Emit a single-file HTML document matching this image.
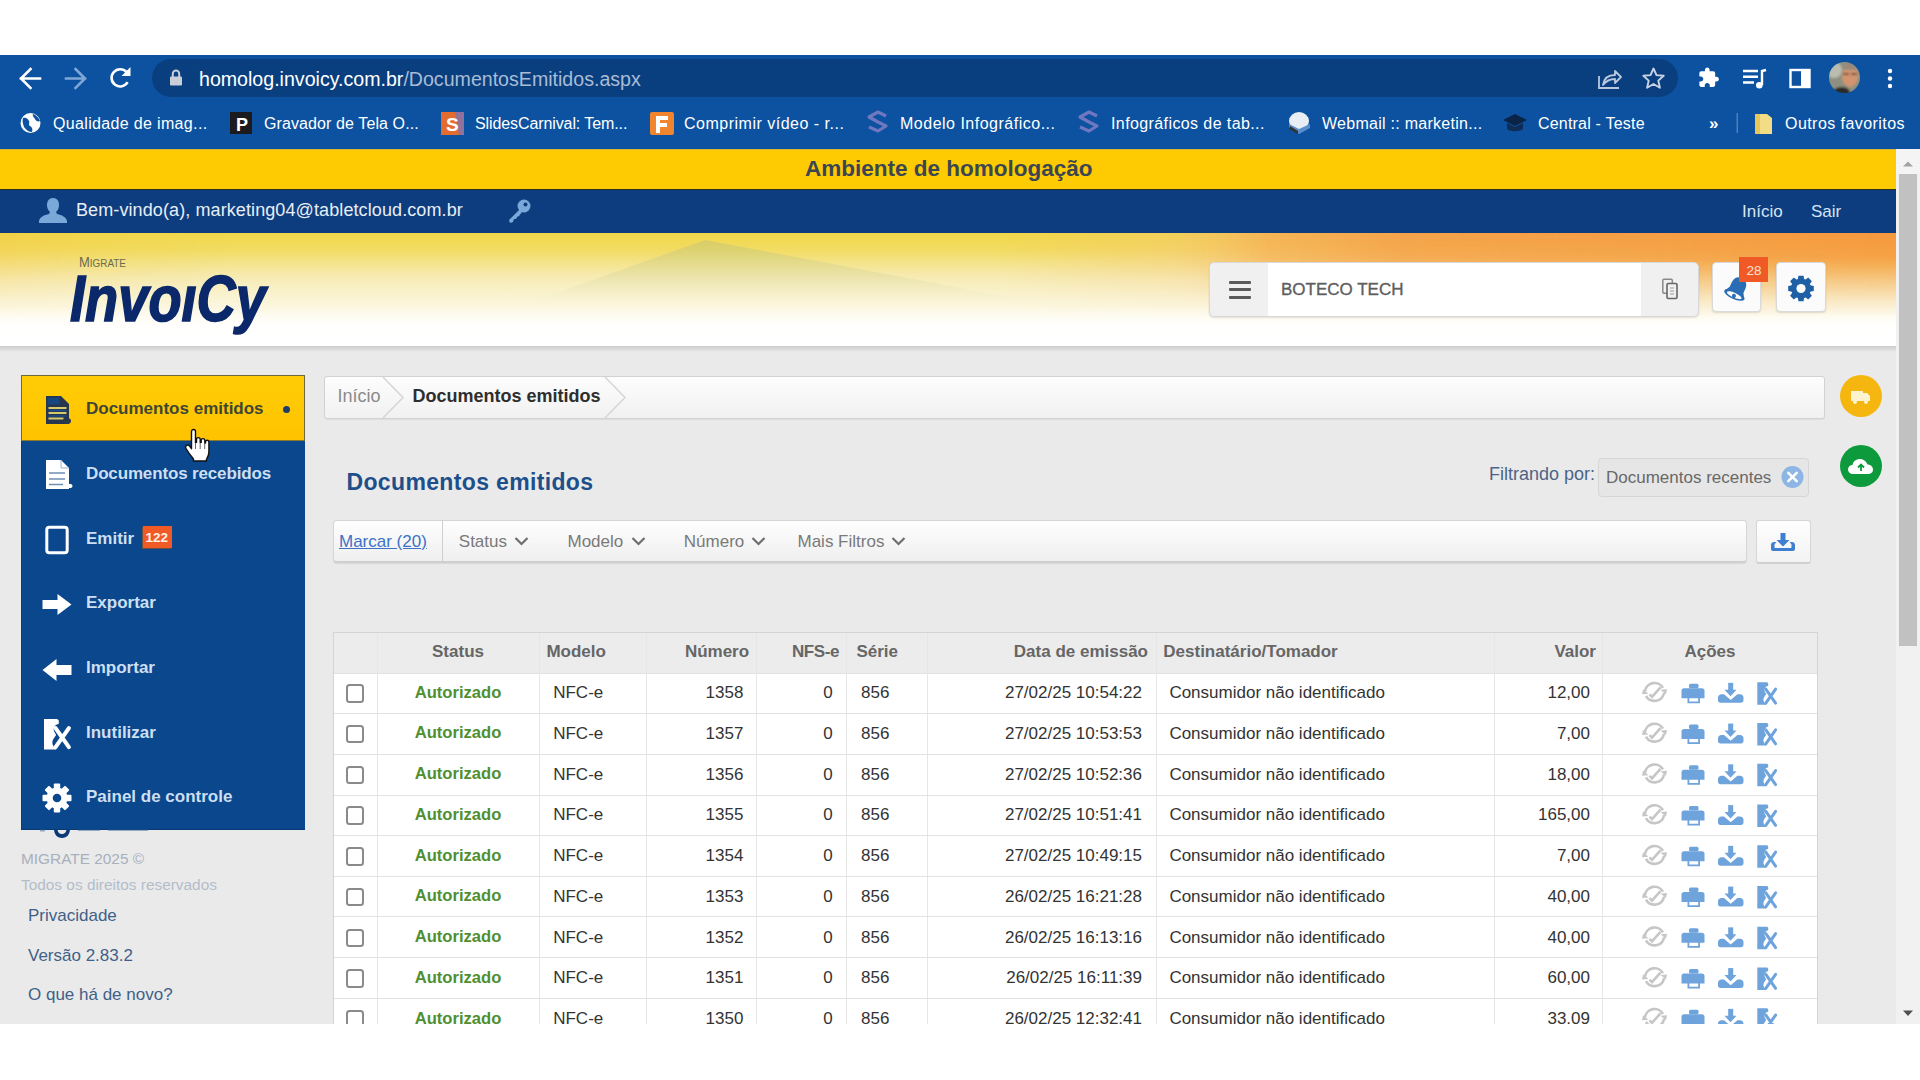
<!DOCTYPE html>
<html><head><meta charset="utf-8">
<style>
*{box-sizing:border-box;margin:0;padding:0}
html,body{width:1920px;height:1080px;overflow:hidden;background:#fff;font-family:"Liberation Sans",sans-serif}
.a{position:absolute}
.t{position:absolute;white-space:nowrap;line-height:1}
#chrome{left:0;top:55px;width:1920px;height:94px;background:#0c52a0}
#omni{left:152px;top:59px;width:1526px;height:38px;border-radius:19px;background:#0a3f7f}
#banner{left:0;top:149px;width:1896px;height:41px;background:#fecb02;border-top:1px solid #d8b830;border-bottom:1.5px solid #2e2e22}
#ubar{left:0;top:190px;width:1896px;height:43px;background:#0d3d7e}
#hdr{left:0;top:233px;width:1896px;height:113px;overflow:hidden;background:#fff}
#content{left:0;top:346px;width:1896px;height:678px;background:#eaeaea;overflow:hidden}
#sb{left:1896px;top:149px;width:24px;height:875px;background:#f1f1f1}
</style></head><body>
<div id="chrome" class="a"></div>
<div id="omni" class="a"></div>

<!-- chrome toolbar -->
<svg class="a" style="left:0;top:55px" width="1920" height="94" viewBox="0 55 1920 94">
 <g fill="none" stroke="#fff" stroke-width="2.6" stroke-linecap="square">
  <path d="M21 78.5h19M30.5 69l-9.5 9.5 9.5 9.5"/>
  <path d="M66 78.5h19M75.5 69l9.5 9.5-9.5 9.5" stroke="#7fa6d6"/>
 </g>
 <path d="M127.6 82.2A8.6 8.6 0 1 1 126.5 72" fill="none" stroke="#fff" stroke-width="2.6"/>
 <path d="M130.5 67v9h-9z" fill="#fff"/>
 <!-- lock -->
 <rect x="170" y="76.5" width="12" height="9" rx="1" fill="#c9cfd8"/>
 <path d="M172.8 77v-3.2a3.2 3.2 0 0 1 6.4 0v3.2" fill="none" stroke="#c9cfd8" stroke-width="2"/>
 <!-- share -->
 <path d="M599 76v12h20" fill="none" stroke="#b9c8de" stroke-width="1.8" transform="translate(1000 0)"/>
 <path d="M1603 85c1-7 6-10 12-10v-4l6 6-6 6v-4c-5 0-9 2-12 6z" fill="none" stroke="#b9c8de" stroke-width="1.8" stroke-linejoin="round"/>
 <!-- star -->
 <path d="M1653.5 68.5l3 6.6 7.2.7-5.4 4.8 1.6 7.1-6.4-3.7-6.4 3.7 1.6-7.1-5.4-4.8 7.2-.7z" fill="none" stroke="#c8d4e6" stroke-width="1.9" stroke-linejoin="round"/>
 <!-- puzzle -->
 <path transform="translate(1697.5 66.5) scale(.93)" d="M20.5 11H19V7c0-1.1-.9-2-2-2h-4V3.5C13 2.12 11.88 1 10.5 1S8 2.12 8 3.5V5H4c-1.1 0-1.99.9-1.99 2v3.8H3.5c1.49 0 2.7 1.21 2.7 2.7s-1.210 2.7-2.7 2.7H2V20c0 1.1.9 2 2 2h3.8v-1.5c0-1.49 1.21-2.7 2.7-2.7 1.49 0 2.7 1.21 2.7 2.7V22H17c1.1 0 2-.9 2-2v-4h1.5c1.38 0 2.5-1.12 2.5-2.5S21.88 11 20.5 11z" fill="#fff"/>
 <!-- media -->
 <g stroke="#fff" stroke-width="2.4" fill="none"><path d="M1743 71h15M1743 76.8h15M1743 82.5h11"/><path d="M1762 85V71l4-1"/></g>
 <circle cx="1759.3" cy="85.2" r="3.3" fill="#fff"/>
 <!-- chr-sidebar -->
 <rect x="1790.5" y="70" width="19" height="17" fill="none" stroke="#fff" stroke-width="2.4"/>
 <rect x="1801" y="70" width="9" height="17" fill="#fff"/>
 <!-- avatar -->
 <defs><clipPath id="avc"><circle cx="1844.5" cy="77.5" r="15.5"/></clipPath><filter id="avb"><feGaussianBlur stdDeviation="1.2"/></filter></defs>
 <g clip-path="url(#avc)"><g filter="url(#avb)">
  <rect x="1826" y="60" width="38" height="36" fill="#8d9080"/>
  <circle cx="1834" cy="70" r="8" fill="#b9bcae"/>
  <ellipse cx="1850" cy="76" rx="8" ry="11" fill="#d49470"/>
  <path d="M1842 66c3-4 12-4 15 0v4h-15z" fill="#9a8a7c"/>
  <path d="M1843 74h6M1851 74h6" stroke="#4a3a30" stroke-width="1.5"/>
  <path d="M1830 96c2-6 6-9 12-9s8 3 9 9z" fill="#2b2a28"/>
 </g></g>
 <!-- dots -->
 <g fill="#fff"><circle cx="1890" cy="71" r="2.2"/><circle cx="1890" cy="78.5" r="2.2"/><circle cx="1890" cy="86" r="2.2"/></g>
</svg>
<div class="t" style="left:199px;top:70px;font-size:19.6px;color:#fff">homolog.invoicy.com.br<span style="color:#a9bcd6">/DocumentosEmitidos.aspx</span></div>

<!-- bookmarks -->
<svg class="a" style="left:0;top:105px" width="1920" height="40" viewBox="0 105 1920 40">
 <circle cx="30.5" cy="123" r="10" fill="#fff"/>
 <path d="M23 118c3-1 5 1 6 3s-1 4 1 5 3 3 2 6c-3 0-6-2-8-5-1-3-2-6-1-9zM33 114c3 1 6 4 7 7-2 1-4 0-5-2s-3-3-2-5z" fill="#0c52a0"/>
 <rect x="230" y="112" width="22" height="22" fill="#1b1b1f"/>
 <text x="236" y="131" font-family="Liberation Sans" font-weight="bold" font-size="18" fill="#fff">P</text>
 <rect x="441" y="112" width="23" height="23" fill="#e46c2e"/>
 <path d="M455 112h9v23h-5z" fill="#7d74b5" opacity=".8"/>
 <text x="446" y="131" font-family="Liberation Sans" font-weight="bold" font-size="19" fill="#fff">S</text>
 <rect x="650" y="112" width="24" height="23" rx="2" fill="#f0842f"/>
 <path d="M656 116h12v4h-8v3h7v4h-7v6h-4z" fill="#fff"/>
 <g fill="none" stroke="#6f77c0" stroke-width="3.2" stroke-linejoin="round">
  <path d="M886 116l-8-4-9 5 9 5 8 4-8 5-9-4"/>
  <path d="M1097 116l-8-4-9 5 9 5 8 4-8 5-9-4"/>
 </g>
 <ellipse cx="1299" cy="121" rx="10" ry="9" fill="#e9eef4"/>
 <path d="M1289 128l10 6 11-6v-4l-11 5-10-5z" fill="#5b8fc9"/>
 <path d="M1290 126l8 5v3l-9-5z" fill="#333"/>
 <path d="M1503 120l12-6 12 6-12 6z" fill="#0b2347"/>
 <path d="M1507 123v6c3 3 13 3 16 0v-6l-8 4z" fill="#102c55"/>
 <text x="1709" y="129" font-family="Liberation Sans" font-weight="bold" font-size="17" fill="#fff">»</text>
 <rect x="1736.5" y="113" width="1.5" height="20" fill="#4f7fbd"/>
 <path d="M1755 114h12l5 4v16h-17z" fill="#f2dc86"/>
 <path d="M1755 114h5v20h-5z" fill="#e8c75a"/>
</svg>
<div class="t" style="left:53px;top:115.5px;font-size:16px;color:#fff;letter-spacing:0.34px">Qualidade de imag...</div>
<div class="t" style="left:264px;top:115.5px;font-size:16px;color:#fff;letter-spacing:0.1px">Gravador de Tela O...</div>
<div class="t" style="left:475px;top:115.5px;font-size:16px;color:#fff;letter-spacing:-0.1px">SlidesCarnival: Tem...</div>
<div class="t" style="left:684px;top:115.5px;font-size:16px;color:#fff;letter-spacing:0.5px">Comprimir vídeo - r...</div>
<div class="t" style="left:900px;top:115.5px;font-size:16px;color:#fff;letter-spacing:0.5px">Modelo Infográfico...</div>
<div class="t" style="left:1111px;top:115.5px;font-size:16px;color:#fff;letter-spacing:0.4px">Infográficos de tab...</div>
<div class="t" style="left:1322px;top:115.5px;font-size:16px;color:#fff;letter-spacing:0.27px">Webmail :: marketin...</div>
<div class="t" style="left:1538px;top:115.5px;font-size:16px;color:#fff;letter-spacing:0.2px">Central - Teste</div>
<div class="t" style="left:1785px;top:115.5px;font-size:16px;color:#fff;letter-spacing:0.44px">Outros favoritos</div>
<div id="banner" class="a"></div>
<div id="ubar" class="a"></div>
<div class="t" style="left:805px;top:157.5px;font-size:22.5px;font-weight:bold;color:#3b4652">Ambiente de homologação</div>
<svg class="a" style="left:36px;top:196px" width="34" height="30" viewBox="0 0 34 30">
 <path d="M17 2c-4 0-6 3-6 7 0 3 1 5 3 7l-1 2c-5 1-9 3-10 7v2h28v-2c-1-4-5-6-10-7l-1-2c2-2 3-4 3-7 0-4-2-7-6-7z" fill="#7aa9d9"/>
</svg>
<div class="t" style="left:76px;top:200.5px;font-size:18px;color:#e8eef6;letter-spacing:0.1px">Bem-vindo(a), marketing04@tabletcloud.com.br</div>
<svg class="a" style="left:504px;top:196px" width="30" height="30" viewBox="0 0 30 30">
 <circle cx="20" cy="10" r="6.5" fill="#7aa9d9"/>
 <circle cx="21.5" cy="8.5" r="2" fill="#0d3d7e"/>
 <path d="M16 13L5 24l1 3 3-1 1-3 2 0 1-2 2-1 3-4z" fill="#7aa9d9"/>
</svg>
<div class="t" style="left:1742px;top:203px;font-size:17px;color:#d6e4f4">Início</div>
<div class="t" style="left:1811px;top:203px;font-size:17px;color:#d6e4f4">Sair</div>

<div id="hdr" class="a">
<svg class="a" style="left:0;top:0" width="1896" height="113" viewBox="0 0 1896 113">
 <defs>
  <linearGradient id="gy" x1="0" y1="0" x2="0" y2="1">
   <stop offset="0" stop-color="#f1d84a"/>
   <stop offset=".15" stop-color="#f2dc62"/>
   <stop offset=".4" stop-color="#f5e8a8" stop-opacity=".85"/>
   <stop offset=".65" stop-color="#faf2d0" stop-opacity=".7"/>
   <stop offset=".9" stop-color="#fff" stop-opacity="0"/>
  </linearGradient>
  <linearGradient id="gh" x1="0" y1="0" x2="1" y2="0">
   <stop offset="0" stop-color="#f6c440" stop-opacity=".35"/>
   <stop offset=".12" stop-color="#f0d84a" stop-opacity="0"/>
  </linearGradient>
  <linearGradient id="go" x1="0" y1="0" x2="1" y2="0">
   <stop offset="0" stop-color="#f9c060" stop-opacity="0"/>
   <stop offset=".2" stop-color="#f8bc78" stop-opacity=".35"/>
   <stop offset=".3" stop-color="#f6a858" stop-opacity=".75"/>
   <stop offset=".45" stop-color="#f59c4a" stop-opacity=".9"/>
   <stop offset="1" stop-color="#f5983e" stop-opacity="1"/>
  </linearGradient>
  <linearGradient id="gv" x1="0" y1="0" x2="0" y2="1">
   <stop offset="0" stop-color="#fff" stop-opacity="1"/>
   <stop offset=".22" stop-color="#fff" stop-opacity=".85"/>
   <stop offset=".42" stop-color="#fff" stop-opacity=".42"/>
   <stop offset=".6" stop-color="#fff" stop-opacity=".12"/>
   <stop offset=".75" stop-color="#fff" stop-opacity="0"/>
  </linearGradient>
  <mask id="mv"><rect width="1896" height="113" fill="url(#gv)"/></mask>
  <linearGradient id="gm" x1="0" y1="0" x2="0" y2="1">
   <stop offset="0" stop-color="#c8c470" stop-opacity=".6"/>
   <stop offset=".45" stop-color="#d2d49a" stop-opacity=".35"/>
   <stop offset=".8" stop-color="#dfe0c0" stop-opacity="0"/>
  </linearGradient>
 </defs>
 <rect width="1896" height="113" fill="#fff"/>
 <rect width="1896" height="113" fill="url(#gy)"/>
 <rect width="1896" height="113" fill="url(#gh)" mask="url(#mv)"/>
 <rect x="1000" width="896" height="113" fill="url(#go)" mask="url(#mv)"/>
 <path d="M500 80L705 7 1120 85z" fill="url(#gm)"/>
 <text x="79" y="266.8" transform="translate(0 -233)" font-family="Liberation Sans" fill="#6a6a50" textLength="47" lengthAdjust="spacingAndGlyphs"><tspan font-size="15">M</tspan><tspan font-size="11.5">IGRATE</tspan></text>
 <text x="70" y="321" transform="translate(0 -233)" font-family="Liberation Sans" font-weight="bold" font-style="italic" font-size="65" fill="#0b286a" stroke="#0b286a" stroke-width="1.6" textLength="196" lengthAdjust="spacingAndGlyphs">InvoıCy</text>
</svg>
</div>
<div class="a" style="left:1209px;top:262px;width:490px;height:55px;border:1px solid #d9d9d9;border-radius:5px;background:#f0f0f0;box-shadow:0 1px 2px rgba(0,0,0,.12)"></div>
<div class="a" style="left:1268px;top:263px;width:373px;height:53px;background:#fff"></div>
<div class="a" style="left:1229px;top:280.5px;width:22px;height:3px;background:#5a5a5a;border-radius:1px"></div>
<div class="a" style="left:1229px;top:288px;width:22px;height:3px;background:#5a5a5a;border-radius:1px"></div>
<div class="a" style="left:1229px;top:295.5px;width:22px;height:3px;background:#5a5a5a;border-radius:1px"></div>
<div class="t" style="left:1281px;top:281px;font-size:17px;color:#5e5e5e;letter-spacing:0;-webkit-text-stroke:.35px #5e5e5e">BOTECO TECH</div>
<svg class="a" style="left:1658px;top:276px" width="24" height="26" viewBox="0 0 24 26">
 <rect x="4.8" y="3.2" width="9.5" height="14" rx="1.2" fill="#f0f0f0" stroke="#8a8a8a" stroke-width="1.5"/>
 <rect x="9" y="7.5" width="10" height="15" rx="1.2" fill="#f0f0f0" stroke="#666" stroke-width="1.6"/>
 <path d="M12 12h4M12 15h4M12 18h4" stroke="#9a9a9a" stroke-width="1.2"/>
</svg>
<div class="a" style="left:1712px;top:262px;width:49px;height:50px;border:1px solid #d9d9d9;border-radius:4px;background:#fbfbfb;box-shadow:0 1px 2px rgba(0,0,0,.12)"></div>
<svg class="a" style="left:1720px;top:272px" width="34" height="34" viewBox="0 0 34 34">
 <g transform="rotate(24 17 17)">
  <path d="M17 5c4.5 0 7.5 3.5 7.5 8v5l3 5H6.5l3-5v-5c0-4.5 3-8 7.5-8z" fill="#2a6db5"/>
  <ellipse cx="17" cy="23.5" rx="11" ry="4.2" fill="#2a6db5"/>
  <ellipse cx="17" cy="23.8" rx="8" ry="2.4" fill="#fbfbfb"/>
  <circle cx="17" cy="24.5" r="2" fill="#2a6db5"/>
 </g>
</svg>
<div class="a" style="left:1739px;top:257px;width:29px;height:25px;background:#f05a26"></div>
<div class="t" style="left:1746.5px;top:264px;font-size:13.5px;color:#fde3d3">28</div>
<div class="a" style="left:1776px;top:262px;width:50px;height:50px;border:1px solid #d9d9d9;border-radius:4px;background:#fbfbfb;box-shadow:0 1px 2px rgba(0,0,0,.12)"></div>
<svg class="a" style="left:1786px;top:273px" width="30" height="30" viewBox="0 0 30 30">
 <g fill="#1f5fa6" transform="translate(15 15.5)">
  <circle r="10"/>
  <path d="M-2.6-12.8h5.2l.6 4h-6.4z" transform="rotate(0)"/>
  <path d="M-2.6-12.8h5.2l.6 4h-6.4z" transform="rotate(45)"/>
  <path d="M-2.6-12.8h5.2l.6 4h-6.4z" transform="rotate(90)"/>
  <path d="M-2.6-12.8h5.2l.6 4h-6.4z" transform="rotate(135)"/>
  <path d="M-2.6-12.8h5.2l.6 4h-6.4z" transform="rotate(180)"/>
  <path d="M-2.6-12.8h5.2l.6 4h-6.4z" transform="rotate(225)"/>
  <path d="M-2.6-12.8h5.2l.6 4h-6.4z" transform="rotate(270)"/>
  <path d="M-2.6-12.8h5.2l.6 4h-6.4z" transform="rotate(315)"/>
  <circle r="4.6" fill="#fbfbfb"/>
 </g>
</svg>

<div id="content" class="a"></div>
<div class="a" style="left:0;top:346px;width:1896px;height:6px;background:linear-gradient(rgba(0,0,0,.13),rgba(0,0,0,0))"></div>

<!-- main -->
<div class="a" style="left:324px;top:376px;width:1501px;height:43px;border:1px solid #d2d2d2;border-radius:3px;background:linear-gradient(#fdfdfd,#f1f1f1);box-shadow:0 1px 1px rgba(0,0,0,.06)"></div>
<svg class="a" style="left:380px;top:377px" width="250" height="41" viewBox="380 377 250 41">
 <path d="M383 377l20 20.5-20 20.5" fill="none" stroke="#d6d6d6" stroke-width="1.5"/>
 <path d="M605 377l20 20.5-20 20.5" fill="none" stroke="#d6d6d6" stroke-width="1.5"/>
</svg>
<div class="t" style="left:337.5px;top:387.26px;font-size:18px;color:#8a8a8a;">Início</div>
<div class="t" style="left:412.5px;top:387.26px;font-size:18px;font-weight:bold;color:#2e2e2e;">Documentos emitidos</div>
<div class="t" style="left:346.5px;top:470.53px;font-size:23px;font-weight:bold;color:#1e4f8a;letter-spacing:.35px;">Documentos emitidos</div>
<div class="t" style="left:1489px;top:465.36px;font-size:18px;color:#4b6487;">Filtrando por:</div>
<div class="a" style="left:1598px;top:457.5px;width:211px;height:39.5px;border:1px solid #d6d6d6;border-radius:4px;background:#e6e6e6"></div>
<div class="t" style="left:1606px;top:468.91px;font-size:17px;color:#686868;">Documentos recentes</div>
<svg class="a" style="left:1780px;top:465px" width="25" height="25" viewBox="0 0 25 25">
 <circle cx="12.5" cy="12" r="11" fill="#8db6e4"/>
 <path d="M8.3 7.8l8.4 8.4M16.7 7.8l-8.4 8.4" stroke="#fff" stroke-width="2.6" stroke-linecap="round"/>
</svg>
<div class="a" style="left:332.5px;top:519.5px;width:1414px;height:43.5px;border:1px solid #d6d6d6;border-bottom:2px solid #cfcfcf;border-radius:4px;background:linear-gradient(#fefefe,#efefef);box-shadow:0 1px 1px rgba(0,0,0,.08)"></div>
<div class="a" style="left:441.5px;top:520px;width:1px;height:42px;background:#cfcfcf"></div>
<div class="t" style="left:339px;top:532.61px;font-size:17px;color:#3d72c6;text-decoration:underline;">Marcar (20)</div>
<div class="t" style="left:458.8px;top:532.61px;font-size:17px;color:#7a7a7a;">Status</div>
<svg class="a" style="left:514px;top:535px" width="15" height="12" viewBox="0 0 15 12"><path d="M1.5 3l6 6 6-6" fill="none" stroke="#6f6f6f" stroke-width="2.2"/></svg>
<div class="t" style="left:567.5px;top:532.61px;font-size:17px;color:#7a7a7a;">Modelo</div>
<svg class="a" style="left:631px;top:535px" width="15" height="12" viewBox="0 0 15 12"><path d="M1.5 3l6 6 6-6" fill="none" stroke="#6f6f6f" stroke-width="2.2"/></svg>
<div class="t" style="left:683.8px;top:532.61px;font-size:17px;color:#7a7a7a;">Número</div>
<svg class="a" style="left:751px;top:535px" width="15" height="12" viewBox="0 0 15 12"><path d="M1.5 3l6 6 6-6" fill="none" stroke="#6f6f6f" stroke-width="2.2"/></svg>
<div class="t" style="left:797.5px;top:532.61px;font-size:17px;color:#7a7a7a;">Mais Filtros</div>
<svg class="a" style="left:891px;top:535px" width="15" height="12" viewBox="0 0 15 12"><path d="M1.5 3l6 6 6-6" fill="none" stroke="#6f6f6f" stroke-width="2.2"/></svg>
<div class="a" style="left:1755.5px;top:519.5px;width:55px;height:44px;border:1px solid #d6d6d6;border-bottom:2px solid #cfcfcf;border-radius:3px;background:linear-gradient(#fefefe,#f3f3f3)"></div>
<svg class="a" style="left:1768px;top:530px" width="30" height="26" viewBox="0 0 30 26">
 <path d="M12.5 3h5v7h4l-6.5 6.5L8.5 10h4z" fill="#3f7fcf"/>
 <path d="M3 15c0-2 1.5-3 3-3h1.5l1 1c-1 0-2 .6-2 1.8V17c0 .6.4 1 1 1h15c.6 0 1-.4 1-1v-2.2c0-1.2-1-1.8-2-1.8l1-1H24c1.5 0 3 1 3 3v4c0 1.3-.8 2-2 2H5c-1.2 0-2-.7-2-2z" fill="#3f7fcf"/>
</svg>
<svg class="a" style="left:1838px;top:373px" width="46" height="118" viewBox="1838 373 46 118">
 <circle cx="1861" cy="396" r="21" fill="#f5b60f"/>
 <path d="M1851 391h12v10h-12z" fill="#fdf3cf"/>
 <path d="M1863 393h4l3 3v5h-7z" fill="#fdf3cf"/>
 <circle cx="1855" cy="402" r="2" fill="#fdf3cf"/><circle cx="1866" cy="402" r="2" fill="#fdf3cf"/>
 <circle cx="1861" cy="466" r="21" fill="#0c9a3c"/>
 <path d="M1853 474c-3 0-5-2-5-4.5s2-4.5 4.5-4.5c.5-3.5 3.5-6 7.5-6 3.5 0 6.5 2.5 7.5 5.5 3 0 5.5 2.2 5.5 5s-2.2 4.5-5 4.5z" fill="#fff"/>
 <path d="M1861 471v-6M1858 467.5l3-3 3 3" fill="none" stroke="#0c9a3c" stroke-width="1.8"/>
</svg>
<div class="a" style="left:332.5px;top:632px;width:1485.5px;height:392px;background:#fff;border:1px solid #d4d4d4;border-bottom:none"></div>
<div class="a" style="left:333.5px;top:633px;width:1483.5px;height:41px;background:#ececec;border-bottom:1px solid #e2e2e2"></div>
<div class="a" style="left:376.5px;top:633px;width:1px;height:391px;background:#e6e6e6"></div>
<div class="a" style="left:538.5px;top:633px;width:1px;height:391px;background:#e6e6e6"></div>
<div class="a" style="left:645.5px;top:633px;width:1px;height:391px;background:#e6e6e6"></div>
<div class="a" style="left:756.0px;top:633px;width:1px;height:391px;background:#e6e6e6"></div>
<div class="a" style="left:846.0px;top:633px;width:1px;height:391px;background:#e6e6e6"></div>
<div class="a" style="left:927.0px;top:633px;width:1px;height:391px;background:#e6e6e6"></div>
<div class="a" style="left:1155.5px;top:633px;width:1px;height:391px;background:#e6e6e6"></div>
<div class="a" style="left:1493.5px;top:633px;width:1px;height:391px;background:#e6e6e6"></div>
<div class="a" style="left:1602.0px;top:633px;width:1px;height:391px;background:#e6e6e6"></div>
<div class="a" style="left:333.5px;top:713px;width:1483.5px;height:1px;background:#e2e2e2"></div>
<div class="a" style="left:333.5px;top:754px;width:1483.5px;height:1px;background:#e2e2e2"></div>
<div class="a" style="left:333.5px;top:795px;width:1483.5px;height:1px;background:#e2e2e2"></div>
<div class="a" style="left:333.5px;top:835px;width:1483.5px;height:1px;background:#e2e2e2"></div>
<div class="a" style="left:333.5px;top:876px;width:1483.5px;height:1px;background:#e2e2e2"></div>
<div class="a" style="left:333.5px;top:916px;width:1483.5px;height:1px;background:#e2e2e2"></div>
<div class="a" style="left:333.5px;top:957px;width:1483.5px;height:1px;background:#e2e2e2"></div>
<div class="a" style="left:333.5px;top:998px;width:1483.5px;height:1px;background:#e2e2e2"></div>
<div class="t" style="left:258px;width:400px;text-align:center;top:643.36px;font-size:17px;font-weight:bold;color:#666;">Status</div>
<div class="t" style="left:546.4px;top:643.36px;font-size:17px;font-weight:bold;color:#666;">Modelo</div>
<div class="t" style="right:1170.9px;top:643.36px;font-size:17px;font-weight:bold;color:#666;">Número</div>
<div class="t" style="right:1081px;top:643.36px;font-size:17px;font-weight:bold;color:#666;letter-spacing:-.4px;">NFS-e</div>
<div class="t" style="left:856.4px;top:643.36px;font-size:17px;font-weight:bold;color:#666;">Série</div>
<div class="t" style="right:772px;top:643.36px;font-size:17px;font-weight:bold;color:#666;">Data de emissão</div>
<div class="t" style="left:1163.3px;top:643.36px;font-size:17px;font-weight:bold;color:#666;">Destinatário/Tomador</div>
<div class="t" style="right:324px;top:643.36px;font-size:17px;font-weight:bold;color:#666;">Valor</div>
<div class="t" style="left:1510px;width:400px;text-align:center;top:643.36px;font-size:17px;font-weight:bold;color:#666;">Ações</div>
<div class="a" style="left:345.5px;top:684.1px;width:18.5px;height:18.5px;border:2px solid #8a8a8a;border-radius:3.5px;background:#fff"></div>
<div class="t" style="left:258px;width:400px;text-align:center;top:684.55px;font-size:16.6px;font-weight:bold;color:#4f8f31;">Autorizado</div>
<div class="t" style="left:553.2px;top:684.21px;font-size:17px;color:#333;">NFC-e</div>
<div class="t" style="right:1176.6px;top:684.21px;font-size:17px;color:#333;">1358</div>
<div class="t" style="right:1087.2px;top:684.21px;font-size:17px;color:#333;">0</div>
<div class="t" style="left:861px;top:684.21px;font-size:17px;color:#333;">856</div>
<div class="t" style="right:778px;top:684.21px;font-size:17px;color:#333;">27/02/25 10:54:22</div>
<div class="t" style="left:1169.4px;top:684.21px;font-size:17px;color:#333;">Consumidor não identificado</div>
<div class="t" style="right:330px;top:684.21px;font-size:17px;color:#333;">12,00</div>
<div class="a" style="left:345.5px;top:724.9px;width:18.5px;height:18.5px;border:2px solid #8a8a8a;border-radius:3.5px;background:#fff"></div>
<div class="t" style="left:258px;width:400px;text-align:center;top:725.3px;font-size:16.6px;font-weight:bold;color:#4f8f31;">Autorizado</div>
<div class="t" style="left:553.2px;top:724.96px;font-size:17px;color:#333;">NFC-e</div>
<div class="t" style="right:1176.6px;top:724.96px;font-size:17px;color:#333;">1357</div>
<div class="t" style="right:1087.2px;top:724.96px;font-size:17px;color:#333;">0</div>
<div class="t" style="left:861px;top:724.96px;font-size:17px;color:#333;">856</div>
<div class="t" style="right:778px;top:724.96px;font-size:17px;color:#333;">27/02/25 10:53:53</div>
<div class="t" style="left:1169.4px;top:724.96px;font-size:17px;color:#333;">Consumidor não identificado</div>
<div class="t" style="right:330px;top:724.96px;font-size:17px;color:#333;">7,00</div>
<div class="a" style="left:345.5px;top:765.6px;width:18.5px;height:18.5px;border:2px solid #8a8a8a;border-radius:3.5px;background:#fff"></div>
<div class="t" style="left:258px;width:400px;text-align:center;top:766.05px;font-size:16.6px;font-weight:bold;color:#4f8f31;">Autorizado</div>
<div class="t" style="left:553.2px;top:765.71px;font-size:17px;color:#333;">NFC-e</div>
<div class="t" style="right:1176.6px;top:765.71px;font-size:17px;color:#333;">1356</div>
<div class="t" style="right:1087.2px;top:765.71px;font-size:17px;color:#333;">0</div>
<div class="t" style="left:861px;top:765.71px;font-size:17px;color:#333;">856</div>
<div class="t" style="right:778px;top:765.71px;font-size:17px;color:#333;">27/02/25 10:52:36</div>
<div class="t" style="left:1169.4px;top:765.71px;font-size:17px;color:#333;">Consumidor não identificado</div>
<div class="t" style="right:330px;top:765.71px;font-size:17px;color:#333;">18,00</div>
<div class="a" style="left:345.5px;top:806.4px;width:18.5px;height:18.5px;border:2px solid #8a8a8a;border-radius:3.5px;background:#fff"></div>
<div class="t" style="left:258px;width:400px;text-align:center;top:806.8px;font-size:16.6px;font-weight:bold;color:#4f8f31;">Autorizado</div>
<div class="t" style="left:553.2px;top:806.46px;font-size:17px;color:#333;">NFC-e</div>
<div class="t" style="right:1176.6px;top:806.46px;font-size:17px;color:#333;">1355</div>
<div class="t" style="right:1087.2px;top:806.46px;font-size:17px;color:#333;">0</div>
<div class="t" style="left:861px;top:806.46px;font-size:17px;color:#333;">856</div>
<div class="t" style="right:778px;top:806.46px;font-size:17px;color:#333;">27/02/25 10:51:41</div>
<div class="t" style="left:1169.4px;top:806.46px;font-size:17px;color:#333;">Consumidor não identificado</div>
<div class="t" style="right:330px;top:806.46px;font-size:17px;color:#333;">165,00</div>
<div class="a" style="left:345.5px;top:847.1px;width:18.5px;height:18.5px;border:2px solid #8a8a8a;border-radius:3.5px;background:#fff"></div>
<div class="t" style="left:258px;width:400px;text-align:center;top:847.55px;font-size:16.6px;font-weight:bold;color:#4f8f31;">Autorizado</div>
<div class="t" style="left:553.2px;top:847.21px;font-size:17px;color:#333;">NFC-e</div>
<div class="t" style="right:1176.6px;top:847.21px;font-size:17px;color:#333;">1354</div>
<div class="t" style="right:1087.2px;top:847.21px;font-size:17px;color:#333;">0</div>
<div class="t" style="left:861px;top:847.21px;font-size:17px;color:#333;">856</div>
<div class="t" style="right:778px;top:847.21px;font-size:17px;color:#333;">27/02/25 10:49:15</div>
<div class="t" style="left:1169.4px;top:847.21px;font-size:17px;color:#333;">Consumidor não identificado</div>
<div class="t" style="right:330px;top:847.21px;font-size:17px;color:#333;">7,00</div>
<div class="a" style="left:345.5px;top:887.9px;width:18.5px;height:18.5px;border:2px solid #8a8a8a;border-radius:3.5px;background:#fff"></div>
<div class="t" style="left:258px;width:400px;text-align:center;top:888.3px;font-size:16.6px;font-weight:bold;color:#4f8f31;">Autorizado</div>
<div class="t" style="left:553.2px;top:887.96px;font-size:17px;color:#333;">NFC-e</div>
<div class="t" style="right:1176.6px;top:887.96px;font-size:17px;color:#333;">1353</div>
<div class="t" style="right:1087.2px;top:887.96px;font-size:17px;color:#333;">0</div>
<div class="t" style="left:861px;top:887.96px;font-size:17px;color:#333;">856</div>
<div class="t" style="right:778px;top:887.96px;font-size:17px;color:#333;">26/02/25 16:21:28</div>
<div class="t" style="left:1169.4px;top:887.96px;font-size:17px;color:#333;">Consumidor não identificado</div>
<div class="t" style="right:330px;top:887.96px;font-size:17px;color:#333;">40,00</div>
<div class="a" style="left:345.5px;top:928.6px;width:18.5px;height:18.5px;border:2px solid #8a8a8a;border-radius:3.5px;background:#fff"></div>
<div class="t" style="left:258px;width:400px;text-align:center;top:929.05px;font-size:16.6px;font-weight:bold;color:#4f8f31;">Autorizado</div>
<div class="t" style="left:553.2px;top:928.71px;font-size:17px;color:#333;">NFC-e</div>
<div class="t" style="right:1176.6px;top:928.71px;font-size:17px;color:#333;">1352</div>
<div class="t" style="right:1087.2px;top:928.71px;font-size:17px;color:#333;">0</div>
<div class="t" style="left:861px;top:928.71px;font-size:17px;color:#333;">856</div>
<div class="t" style="right:778px;top:928.71px;font-size:17px;color:#333;">26/02/25 16:13:16</div>
<div class="t" style="left:1169.4px;top:928.71px;font-size:17px;color:#333;">Consumidor não identificado</div>
<div class="t" style="right:330px;top:928.71px;font-size:17px;color:#333;">40,00</div>
<div class="a" style="left:345.5px;top:969.4px;width:18.5px;height:18.5px;border:2px solid #8a8a8a;border-radius:3.5px;background:#fff"></div>
<div class="t" style="left:258px;width:400px;text-align:center;top:969.8px;font-size:16.6px;font-weight:bold;color:#4f8f31;">Autorizado</div>
<div class="t" style="left:553.2px;top:969.46px;font-size:17px;color:#333;">NFC-e</div>
<div class="t" style="right:1176.6px;top:969.46px;font-size:17px;color:#333;">1351</div>
<div class="t" style="right:1087.2px;top:969.46px;font-size:17px;color:#333;">0</div>
<div class="t" style="left:861px;top:969.46px;font-size:17px;color:#333;">856</div>
<div class="t" style="right:778px;top:969.46px;font-size:17px;color:#333;">26/02/25 16:11:39</div>
<div class="t" style="left:1169.4px;top:969.46px;font-size:17px;color:#333;">Consumidor não identificado</div>
<div class="t" style="right:330px;top:969.46px;font-size:17px;color:#333;">60,00</div>
<div class="a" style="left:345.5px;top:1010.1px;width:18.5px;height:18.5px;border:2px solid #8a8a8a;border-radius:3.5px;background:#fff"></div>
<div class="t" style="left:258px;width:400px;text-align:center;top:1010.55px;font-size:16.6px;font-weight:bold;color:#4f8f31;">Autorizado</div>
<div class="t" style="left:553.2px;top:1010.21px;font-size:17px;color:#333;">NFC-e</div>
<div class="t" style="right:1176.6px;top:1010.21px;font-size:17px;color:#333;">1350</div>
<div class="t" style="right:1087.2px;top:1010.21px;font-size:17px;color:#333;">0</div>
<div class="t" style="left:861px;top:1010.21px;font-size:17px;color:#333;">856</div>
<div class="t" style="right:778px;top:1010.21px;font-size:17px;color:#333;">26/02/25 12:32:41</div>
<div class="t" style="left:1169.4px;top:1010.21px;font-size:17px;color:#333;">Consumidor não identificado</div>
<div class="t" style="right:330px;top:1010.21px;font-size:17px;color:#333;">33,09</div>
<svg class="a" style="left:1638px;top:676px" width="145" height="348" viewBox="1638 676 145 348">

<g transform="translate(0 0.85)">
 <g fill="none" stroke="#c6c6c6" stroke-width="2.6">
  <path d="M1645 690.5A9.6 9.3 0 0 1 1663 687"/>
  <path d="M1664 692A9.6 9.3 0 0 1 1646 695"/>
  <path d="M1649.5 693.5l2.5 2.5 8.5-9.5"/>
 </g>
 <path d="M1660.5 689l6.5-.5-1 5z M1648.5 693l-6.5.5 1-5z" fill="#c6c6c6"/>
 <g fill="#6ea3dc">
  <rect x="1689" y="682.8" width="9.5" height="4.5" rx="1.5"/>
  <path d="M1685 687.5h17c1.5 0 2.5 1 2.5 2.5v7.5h-23v-7.5c0-1.5 1-2.5 2.5-2.5z"/>
  <path d="M1687.5 692.5h12.5v10h-12.5z M1689.3 694.3v6.4h8.9v-6.4z" fill-rule="evenodd"/>
  <rect x="1728.2" y="682" width="5" height="8"/>
  <path d="M1724.5 689h12l-6 6.5z"/>
  <path d="M1718 697c0-2 1.5-3.5 3.5-3.5h2.5l6.7 5.6 6.7-5.6h2.6c2 0 3.5 1.5 3.5 3.5v2.5c0 1.5-1 2.5-2.5 2.5h-20.5c-1.5 0-2.5-1-2.5-2.5z"/>
  <path d="M1757.3 681.5h9.2c1 0 1.7.7 1.7 1.7v1.8c-2.8.6-4.2 3-3.6 5.3l1.6 2.9-2 3c-1.5 2.6-.6 5.6 2 7v.8h-8.9z"/>
 </g>
 <path d="M1765.8 688.2l9.8 14M1775.6 688.2l-9.8 14" stroke="#6ea3dc" stroke-width="3" stroke-linecap="round"/>
</g>
<g transform="translate(0 41.60)">
 <g fill="none" stroke="#c6c6c6" stroke-width="2.6">
  <path d="M1645 690.5A9.6 9.3 0 0 1 1663 687"/>
  <path d="M1664 692A9.6 9.3 0 0 1 1646 695"/>
  <path d="M1649.5 693.5l2.5 2.5 8.5-9.5"/>
 </g>
 <path d="M1660.5 689l6.5-.5-1 5z M1648.5 693l-6.5.5 1-5z" fill="#c6c6c6"/>
 <g fill="#6ea3dc">
  <rect x="1689" y="682.8" width="9.5" height="4.5" rx="1.5"/>
  <path d="M1685 687.5h17c1.5 0 2.5 1 2.5 2.5v7.5h-23v-7.5c0-1.5 1-2.5 2.5-2.5z"/>
  <path d="M1687.5 692.5h12.5v10h-12.5z M1689.3 694.3v6.4h8.9v-6.4z" fill-rule="evenodd"/>
  <rect x="1728.2" y="682" width="5" height="8"/>
  <path d="M1724.5 689h12l-6 6.5z"/>
  <path d="M1718 697c0-2 1.5-3.5 3.5-3.5h2.5l6.7 5.6 6.7-5.6h2.6c2 0 3.5 1.5 3.5 3.5v2.5c0 1.5-1 2.5-2.5 2.5h-20.5c-1.5 0-2.5-1-2.5-2.5z"/>
  <path d="M1757.3 681.5h9.2c1 0 1.7.7 1.7 1.7v1.8c-2.8.6-4.2 3-3.6 5.3l1.6 2.9-2 3c-1.5 2.6-.6 5.6 2 7v.8h-8.9z"/>
 </g>
 <path d="M1765.8 688.2l9.8 14M1775.6 688.2l-9.8 14" stroke="#6ea3dc" stroke-width="3" stroke-linecap="round"/>
</g>
<g transform="translate(0 82.35)">
 <g fill="none" stroke="#c6c6c6" stroke-width="2.6">
  <path d="M1645 690.5A9.6 9.3 0 0 1 1663 687"/>
  <path d="M1664 692A9.6 9.3 0 0 1 1646 695"/>
  <path d="M1649.5 693.5l2.5 2.5 8.5-9.5"/>
 </g>
 <path d="M1660.5 689l6.5-.5-1 5z M1648.5 693l-6.5.5 1-5z" fill="#c6c6c6"/>
 <g fill="#6ea3dc">
  <rect x="1689" y="682.8" width="9.5" height="4.5" rx="1.5"/>
  <path d="M1685 687.5h17c1.5 0 2.5 1 2.5 2.5v7.5h-23v-7.5c0-1.5 1-2.5 2.5-2.5z"/>
  <path d="M1687.5 692.5h12.5v10h-12.5z M1689.3 694.3v6.4h8.9v-6.4z" fill-rule="evenodd"/>
  <rect x="1728.2" y="682" width="5" height="8"/>
  <path d="M1724.5 689h12l-6 6.5z"/>
  <path d="M1718 697c0-2 1.5-3.5 3.5-3.5h2.5l6.7 5.6 6.7-5.6h2.6c2 0 3.5 1.5 3.5 3.5v2.5c0 1.5-1 2.5-2.5 2.5h-20.5c-1.5 0-2.5-1-2.5-2.5z"/>
  <path d="M1757.3 681.5h9.2c1 0 1.7.7 1.7 1.7v1.8c-2.8.6-4.2 3-3.6 5.3l1.6 2.9-2 3c-1.5 2.6-.6 5.6 2 7v.8h-8.9z"/>
 </g>
 <path d="M1765.8 688.2l9.8 14M1775.6 688.2l-9.8 14" stroke="#6ea3dc" stroke-width="3" stroke-linecap="round"/>
</g>
<g transform="translate(0 123.10)">
 <g fill="none" stroke="#c6c6c6" stroke-width="2.6">
  <path d="M1645 690.5A9.6 9.3 0 0 1 1663 687"/>
  <path d="M1664 692A9.6 9.3 0 0 1 1646 695"/>
  <path d="M1649.5 693.5l2.5 2.5 8.5-9.5"/>
 </g>
 <path d="M1660.5 689l6.5-.5-1 5z M1648.5 693l-6.5.5 1-5z" fill="#c6c6c6"/>
 <g fill="#6ea3dc">
  <rect x="1689" y="682.8" width="9.5" height="4.5" rx="1.5"/>
  <path d="M1685 687.5h17c1.5 0 2.5 1 2.5 2.5v7.5h-23v-7.5c0-1.5 1-2.5 2.5-2.5z"/>
  <path d="M1687.5 692.5h12.5v10h-12.5z M1689.3 694.3v6.4h8.9v-6.4z" fill-rule="evenodd"/>
  <rect x="1728.2" y="682" width="5" height="8"/>
  <path d="M1724.5 689h12l-6 6.5z"/>
  <path d="M1718 697c0-2 1.5-3.5 3.5-3.5h2.5l6.7 5.6 6.7-5.6h2.6c2 0 3.5 1.5 3.5 3.5v2.5c0 1.5-1 2.5-2.5 2.5h-20.5c-1.5 0-2.5-1-2.5-2.5z"/>
  <path d="M1757.3 681.5h9.2c1 0 1.7.7 1.7 1.7v1.8c-2.8.6-4.2 3-3.6 5.3l1.6 2.9-2 3c-1.5 2.6-.6 5.6 2 7v.8h-8.9z"/>
 </g>
 <path d="M1765.8 688.2l9.8 14M1775.6 688.2l-9.8 14" stroke="#6ea3dc" stroke-width="3" stroke-linecap="round"/>
</g>
<g transform="translate(0 163.85)">
 <g fill="none" stroke="#c6c6c6" stroke-width="2.6">
  <path d="M1645 690.5A9.6 9.3 0 0 1 1663 687"/>
  <path d="M1664 692A9.6 9.3 0 0 1 1646 695"/>
  <path d="M1649.5 693.5l2.5 2.5 8.5-9.5"/>
 </g>
 <path d="M1660.5 689l6.5-.5-1 5z M1648.5 693l-6.5.5 1-5z" fill="#c6c6c6"/>
 <g fill="#6ea3dc">
  <rect x="1689" y="682.8" width="9.5" height="4.5" rx="1.5"/>
  <path d="M1685 687.5h17c1.5 0 2.5 1 2.5 2.5v7.5h-23v-7.5c0-1.5 1-2.5 2.5-2.5z"/>
  <path d="M1687.5 692.5h12.5v10h-12.5z M1689.3 694.3v6.4h8.9v-6.4z" fill-rule="evenodd"/>
  <rect x="1728.2" y="682" width="5" height="8"/>
  <path d="M1724.5 689h12l-6 6.5z"/>
  <path d="M1718 697c0-2 1.5-3.5 3.5-3.5h2.5l6.7 5.6 6.7-5.6h2.6c2 0 3.5 1.5 3.5 3.5v2.5c0 1.5-1 2.5-2.5 2.5h-20.5c-1.5 0-2.5-1-2.5-2.5z"/>
  <path d="M1757.3 681.5h9.2c1 0 1.7.7 1.7 1.7v1.8c-2.8.6-4.2 3-3.6 5.3l1.6 2.9-2 3c-1.5 2.6-.6 5.6 2 7v.8h-8.9z"/>
 </g>
 <path d="M1765.8 688.2l9.8 14M1775.6 688.2l-9.8 14" stroke="#6ea3dc" stroke-width="3" stroke-linecap="round"/>
</g>
<g transform="translate(0 204.60)">
 <g fill="none" stroke="#c6c6c6" stroke-width="2.6">
  <path d="M1645 690.5A9.6 9.3 0 0 1 1663 687"/>
  <path d="M1664 692A9.6 9.3 0 0 1 1646 695"/>
  <path d="M1649.5 693.5l2.5 2.5 8.5-9.5"/>
 </g>
 <path d="M1660.5 689l6.5-.5-1 5z M1648.5 693l-6.5.5 1-5z" fill="#c6c6c6"/>
 <g fill="#6ea3dc">
  <rect x="1689" y="682.8" width="9.5" height="4.5" rx="1.5"/>
  <path d="M1685 687.5h17c1.5 0 2.5 1 2.5 2.5v7.5h-23v-7.5c0-1.5 1-2.5 2.5-2.5z"/>
  <path d="M1687.5 692.5h12.5v10h-12.5z M1689.3 694.3v6.4h8.9v-6.4z" fill-rule="evenodd"/>
  <rect x="1728.2" y="682" width="5" height="8"/>
  <path d="M1724.5 689h12l-6 6.5z"/>
  <path d="M1718 697c0-2 1.5-3.5 3.5-3.5h2.5l6.7 5.6 6.7-5.6h2.6c2 0 3.5 1.5 3.5 3.5v2.5c0 1.5-1 2.5-2.5 2.5h-20.5c-1.5 0-2.5-1-2.5-2.5z"/>
  <path d="M1757.3 681.5h9.2c1 0 1.7.7 1.7 1.7v1.8c-2.8.6-4.2 3-3.6 5.3l1.6 2.9-2 3c-1.5 2.6-.6 5.6 2 7v.8h-8.9z"/>
 </g>
 <path d="M1765.8 688.2l9.8 14M1775.6 688.2l-9.8 14" stroke="#6ea3dc" stroke-width="3" stroke-linecap="round"/>
</g>
<g transform="translate(0 245.35)">
 <g fill="none" stroke="#c6c6c6" stroke-width="2.6">
  <path d="M1645 690.5A9.6 9.3 0 0 1 1663 687"/>
  <path d="M1664 692A9.6 9.3 0 0 1 1646 695"/>
  <path d="M1649.5 693.5l2.5 2.5 8.5-9.5"/>
 </g>
 <path d="M1660.5 689l6.5-.5-1 5z M1648.5 693l-6.5.5 1-5z" fill="#c6c6c6"/>
 <g fill="#6ea3dc">
  <rect x="1689" y="682.8" width="9.5" height="4.5" rx="1.5"/>
  <path d="M1685 687.5h17c1.5 0 2.5 1 2.5 2.5v7.5h-23v-7.5c0-1.5 1-2.5 2.5-2.5z"/>
  <path d="M1687.5 692.5h12.5v10h-12.5z M1689.3 694.3v6.4h8.9v-6.4z" fill-rule="evenodd"/>
  <rect x="1728.2" y="682" width="5" height="8"/>
  <path d="M1724.5 689h12l-6 6.5z"/>
  <path d="M1718 697c0-2 1.5-3.5 3.5-3.5h2.5l6.7 5.6 6.7-5.6h2.6c2 0 3.5 1.5 3.5 3.5v2.5c0 1.5-1 2.5-2.5 2.5h-20.5c-1.5 0-2.5-1-2.5-2.5z"/>
  <path d="M1757.3 681.5h9.2c1 0 1.7.7 1.7 1.7v1.8c-2.8.6-4.2 3-3.6 5.3l1.6 2.9-2 3c-1.5 2.6-.6 5.6 2 7v.8h-8.9z"/>
 </g>
 <path d="M1765.8 688.2l9.8 14M1775.6 688.2l-9.8 14" stroke="#6ea3dc" stroke-width="3" stroke-linecap="round"/>
</g>
<g transform="translate(0 286.10)">
 <g fill="none" stroke="#c6c6c6" stroke-width="2.6">
  <path d="M1645 690.5A9.6 9.3 0 0 1 1663 687"/>
  <path d="M1664 692A9.6 9.3 0 0 1 1646 695"/>
  <path d="M1649.5 693.5l2.5 2.5 8.5-9.5"/>
 </g>
 <path d="M1660.5 689l6.5-.5-1 5z M1648.5 693l-6.5.5 1-5z" fill="#c6c6c6"/>
 <g fill="#6ea3dc">
  <rect x="1689" y="682.8" width="9.5" height="4.5" rx="1.5"/>
  <path d="M1685 687.5h17c1.5 0 2.5 1 2.5 2.5v7.5h-23v-7.5c0-1.5 1-2.5 2.5-2.5z"/>
  <path d="M1687.5 692.5h12.5v10h-12.5z M1689.3 694.3v6.4h8.9v-6.4z" fill-rule="evenodd"/>
  <rect x="1728.2" y="682" width="5" height="8"/>
  <path d="M1724.5 689h12l-6 6.5z"/>
  <path d="M1718 697c0-2 1.5-3.5 3.5-3.5h2.5l6.7 5.6 6.7-5.6h2.6c2 0 3.5 1.5 3.5 3.5v2.5c0 1.5-1 2.5-2.5 2.5h-20.5c-1.5 0-2.5-1-2.5-2.5z"/>
  <path d="M1757.3 681.5h9.2c1 0 1.7.7 1.7 1.7v1.8c-2.8.6-4.2 3-3.6 5.3l1.6 2.9-2 3c-1.5 2.6-.6 5.6 2 7v.8h-8.9z"/>
 </g>
 <path d="M1765.8 688.2l9.8 14M1775.6 688.2l-9.8 14" stroke="#6ea3dc" stroke-width="3" stroke-linecap="round"/>
</g>
<g transform="translate(0 326.85)">
 <g fill="none" stroke="#c6c6c6" stroke-width="2.6">
  <path d="M1645 690.5A9.6 9.3 0 0 1 1663 687"/>
  <path d="M1664 692A9.6 9.3 0 0 1 1646 695"/>
  <path d="M1649.5 693.5l2.5 2.5 8.5-9.5"/>
 </g>
 <path d="M1660.5 689l6.5-.5-1 5z M1648.5 693l-6.5.5 1-5z" fill="#c6c6c6"/>
 <g fill="#6ea3dc">
  <rect x="1689" y="682.8" width="9.5" height="4.5" rx="1.5"/>
  <path d="M1685 687.5h17c1.5 0 2.5 1 2.5 2.5v7.5h-23v-7.5c0-1.5 1-2.5 2.5-2.5z"/>
  <path d="M1687.5 692.5h12.5v10h-12.5z M1689.3 694.3v6.4h8.9v-6.4z" fill-rule="evenodd"/>
  <rect x="1728.2" y="682" width="5" height="8"/>
  <path d="M1724.5 689h12l-6 6.5z"/>
  <path d="M1718 697c0-2 1.5-3.5 3.5-3.5h2.5l6.7 5.6 6.7-5.6h2.6c2 0 3.5 1.5 3.5 3.5v2.5c0 1.5-1 2.5-2.5 2.5h-20.5c-1.5 0-2.5-1-2.5-2.5z"/>
  <path d="M1757.3 681.5h9.2c1 0 1.7.7 1.7 1.7v1.8c-2.8.6-4.2 3-3.6 5.3l1.6 2.9-2 3c-1.5 2.6-.6 5.6 2 7v.8h-8.9z"/>
 </g>
 <path d="M1765.8 688.2l9.8 14M1775.6 688.2l-9.8 14" stroke="#6ea3dc" stroke-width="3" stroke-linecap="round"/>
</g>
</svg>
<!-- /main -->
<!-- sidebar -->
<div class="a" style="left:21px;top:375px;width:284px;height:455px;background:#0a478c;border-left:1px solid #153a66;border-bottom:1px solid #0a3a75"></div>
<div class="a" style="left:21px;top:375px;width:284px;height:66px;background:linear-gradient(#ffcd05,#ffc300);border:1px solid #6d6b3a;border-bottom-color:#8a7a2a"></div>
<svg class="a" style="left:40px;top:390px" width="40" height="430" viewBox="40 390 40 430">
 <!-- doc active -->
 <path d="M46 396h15l8 8v20H46z" fill="#26364f"/>
 <path d="M47.5 397.5h12v7h-12z" fill="#17457f"/>
 <path d="M48.5 408h18M48.5 413h18M48.5 418.5h15" stroke="#d8c86a" stroke-width="1.8"/>
 <path d="M48.5 410.5h18M48.5 416h18" stroke="#1d4b86" stroke-width="1.6"/>
 <ellipse cx="67" cy="421" rx="4" ry="3" fill="#2b3a4a"/>
 <!-- doc white -->
 <path d="M46 460h15l8 8v21H46z" fill="#fff"/>
 <path d="M61 460v8h8" fill="none" stroke="#9fb4cc" stroke-width="1"/>
 <path d="M49 473h16M49 479h16M49 484.5h14" stroke="#6f8fb3" stroke-width="1.4"/>
 <rect x="66" y="484" width="6.5" height="4" rx="2" fill="#fff"/>
 <!-- tablet -->
 <rect x="46.8" y="527.2" width="20.4" height="25.5" rx="2.5" fill="none" stroke="#fff" stroke-width="3"/>
 <!-- arrow right -->
 <path d="M42.5 600h15v-6l14 10.5-14 10.5v-6h-15z" fill="#fff"/>
 <!-- arrow left -->
 <path d="M71.5 665h-15v-6l-14 11 14 11v-6h15z" fill="#fff"/>
 <!-- inutilizar -->
 <g transform="translate(44 719) scale(1.36) translate(-1757.3 -681.5)">
  <path d="M1757.3 681.5h9.2c1 0 1.7.7 1.7 1.7v1.8c-2.8.6-4.2 3-3.6 5.3l1.6 2.9-2 3c-1.5 2.6-.6 5.6 2 7v.8h-8.9z" fill="#fff"/>
  <path d="M1765.8 688.2l9.8 14M1775.6 688.2l-9.8 14" stroke="#fff" stroke-width="3" stroke-linecap="round"/>
 </g>
 <!-- gear -->
 <g transform="translate(57 798)" fill="#fff">
  <circle r="10.5"/>
  <rect x="-3.2" y="-14.5" width="6.4" height="29" rx="1"/>
  <rect x="-3.2" y="-14.5" width="6.4" height="29" rx="1" transform="rotate(45)"/>
  <rect x="-3.2" y="-14.5" width="6.4" height="29" rx="1" transform="rotate(90)"/>
  <rect x="-3.2" y="-14.5" width="6.4" height="29" rx="1" transform="rotate(135)"/>
  <circle r="4.3" fill="#0a478c"/>
 </g>
</svg>
<div class="t" style="left:86px;top:400px;font-size:17px;font-weight:bold;color:#3e4636">Documentos emitidos</div>
<div class="a" style="left:282.5px;top:405.5px;width:7px;height:7px;border-radius:50%;background:#1d3d68"></div>
<div class="t" style="left:86px;top:464.5px;font-size:17px;font-weight:bold;color:#cddff2;letter-spacing:-.15px">Documentos recebidos</div>
<div class="t" style="left:86px;top:529.5px;font-size:17px;font-weight:bold;color:#cddff2">Emitir</div>
<div class="a" style="left:143px;top:526px;width:28.5px;height:21.5px;background:#f05a26;box-shadow:-1px 1px 0 #6a5040"></div>
<div class="t" style="left:145.5px;top:531px;font-size:13.5px;font-weight:bold;color:#fff1e6">122</div>
<div class="t" style="left:86px;top:593.5px;font-size:17px;font-weight:bold;color:#cddff2">Exportar</div>
<div class="t" style="left:86px;top:658.5px;font-size:17px;font-weight:bold;color:#cddff2">Importar</div>
<div class="t" style="left:86px;top:723.5px;font-size:17px;font-weight:bold;color:#cddff2">Inutilizar</div>
<div class="t" style="left:86px;top:787.5px;font-size:17px;font-weight:bold;color:#cddff2">Painel de controle</div>
<!-- partial logo under sidebar -->
<svg class="a" style="left:28px;top:829px" width="140" height="14" viewBox="0 0 140 14">
 <path d="M26 0c0 5 3 9 8 9s8-4 8-9h-3.5c0 3-2 5-4.5 5s-4.5-2-4.5-5z" fill="#0b3a78"/>
 <path d="M12 0h5v2.5h-5zM50 0h22v2h-22zM80 0h40v2h-40z" fill="#2a5a92" opacity=".45"/>
</svg>
<div class="t" style="left:21px;top:851.4px;font-size:15.4px;color:#a7b0bc">MIGRATE 2025 ©</div>
<div class="t" style="left:21px;top:876.6px;font-size:15.4px;color:#b3bdca">Todos os direitos reservados</div>
<div class="t" style="left:28px;top:907.4px;font-size:17px;color:#3f6189">Privacidade</div>
<div class="t" style="left:28px;top:946.8px;font-size:17px;color:#3f6189">Versão 2.83.2</div>
<div class="t" style="left:28px;top:986.1px;font-size:17px;color:#3f6189">O que há de novo?</div>
<div id="sb" class="a"></div>

<div class="a" style="left:0;top:1024px;width:1920px;height:56px;background:#fff"></div>
<!-- scrollbar -->
<div class="a" style="left:1896px;top:149px;width:24px;height:25px;background:#f4f4f4"></div>
<svg class="a" style="left:1896px;top:149px" width="24" height="875" viewBox="0 0 24 875">
 <path d="M7 17.5h10l-5-5z" fill="#a3a3a3"/>
 <rect x="3" y="25" width="18" height="472" fill="#c1c1c1"/>
 <path d="M7 861.5h10l-5 5.5z" fill="#505050"/>
</svg>
<!-- cursor -->
<svg class="a" style="left:183px;top:428px" width="28" height="36" viewBox="0 0 28 36">
 <path d="M8.5 3.5c0-1.2 1-2 2-2s2 .8 2 2v11l1-.2v-3c0-1 .9-1.7 1.9-1.7s1.8.7 1.8 1.7v3.2l1-.1v-2.2c0-1 .8-1.6 1.8-1.6s1.8.6 1.8 1.6V15l.7.1v-1.3c0-1 .8-1.6 1.7-1.6s1.7.7 1.7 1.7V24c0 3-1 5-2.5 7.5V33H10.5v-2C8 28 5 24 3 20.5c-.8-1.3-.4-2.6.6-3.2 1-.6 2.2-.3 3 .8l1.9 2.6z" fill="#fff" stroke="#111" stroke-width="1.4" stroke-linejoin="round"/>
 <path d="M12.5 15v6M17.2 15v6M21.7 15v6" stroke="#555" stroke-width=".9"/>
</svg>
</body></html>
